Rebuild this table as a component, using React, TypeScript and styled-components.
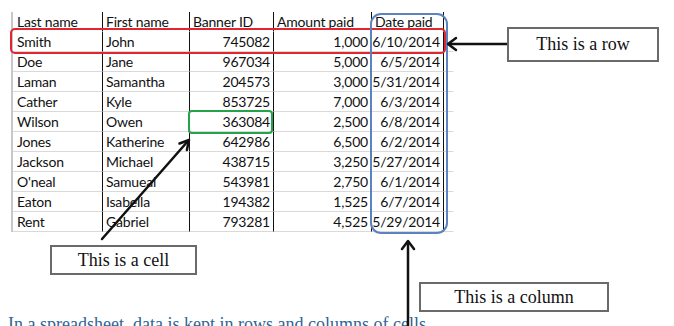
import styled, { createGlobalStyle } from 'styled-components';

const GlobalStyle = createGlobalStyle`
  html, body {
    margin: 0;
    padding: 0;
    background: #fff;
  }
`;

const Page = styled.div`
  position: relative;
  width: 674px;
  height: 326px;
  overflow: hidden;
  background: #fff;
`;

const Sheet = styled.div`
  display: grid;
  grid-template-columns: 90px 87px 84px 98px 72px 10px;
  grid-auto-rows: 20px;
  margin: 12px 0 0 11px;
  width: max-content;
  border-left: 2px solid #c8c8c8;
  font-family: Lato, 'Liberation Sans', sans-serif;
  font-size: 14px;
  letter-spacing: -0.2px;
  color: #111;
`;

const Cell = styled.div<{ $num?: boolean; $edge?: boolean; $head?: boolean }>`
  display: flex;
  align-items: center;
  justify-content: ${(p) => (p.$num ? 'flex-end' : 'flex-start')};
  padding: 0 3px;
  border-bottom: 1px solid ${(p) => (p.$head ? 'transparent' : '#d9d9d9')};
  border-right: 1px solid ${(p) => (p.$edge ? 'transparent' : '#111')};
  white-space: nowrap;
  overflow: hidden;
  box-sizing: border-box;
  &:nth-child(6n + 1) {
    padding-left: 4px;
  }
`;

const Mark = styled.div<{ $color: string; $radius: number }>`
  position: absolute;
  box-sizing: border-box;
  border: 2px solid ${(p) => p.$color};
  border-radius: ${(p) => p.$radius}px;
  pointer-events: none;
`;

const Label = styled.div`
  position: absolute;
  display: flex;
  align-items: center;
  justify-content: center;
  box-sizing: border-box;
  border: 2px solid #6a6a6a;
  background: #fff;
  font-family: 'Liberation Serif', 'Times New Roman', serif;
  font-size: 18px;
  color: #111;
`;

const Arrows = styled.svg`
  position: absolute;
  left: 0;
  top: 0;
  pointer-events: none;
`;

const Caption = styled.p`
  margin: 82px 0 0 8px;
  font-family: 'Liberation Serif', 'Times New Roman', serif;
  font-size: 18px;
  color: #2f6494;
  white-space: nowrap;
`;

const rows: [string, string, string, string, string][] = [
  ['Smith', 'John', '745082', '1,000', '6/10/2014'],
  ['Doe', 'Jane', '967034', '5,000', '6/5/2014'],
  ['Laman', 'Samantha', '204573', '3,000', '5/31/2014'],
  ['Cather', 'Kyle', '853725', '7,000', '6/3/2014'],
  ['Wilson', 'Owen', '363084', '2,500', '6/8/2014'],
  ['Jones', 'Katherine', '642986', '6,500', '6/2/2014'],
  ['Jackson', 'Michael', '438715', '3,250', '5/27/2014'],
  ["O'neal", 'Samueal', '543981', '2,750', '6/1/2014'],
  ['Eaton', 'Isabella', '194382', '1,525', '6/7/2014'],
  ['Rent', 'Gabriel', '793281', '4,525', '5/29/2014'],
];

const headers = ['Last name', 'First name', 'Banner ID', 'Amount paid', 'Date paid'];

export default function App() {
  return (
    <Page>
      <GlobalStyle />
      <Sheet>
        {headers.map((h) => (
          <Cell key={h} $head>
            {h}
          </Cell>
        ))}
        <Cell $edge $head />
        {rows.flatMap((r) => [
          <Cell key={r[0] + 'a'}>{r[0]}</Cell>,
          <Cell key={r[0] + 'b'}>{r[1]}</Cell>,
          <Cell key={r[0] + 'c'} $num>
            {r[2]}
          </Cell>,
          <Cell key={r[0] + 'd'} $num>
            {r[3]}
          </Cell>,
          <Cell key={r[0] + 'e'} $num>
            {r[4]}
          </Cell>,
          <Cell key={r[0] + 'f'} $edge />,
        ])}
      </Sheet>
      <Caption>In a spreadsheet, data is kept in rows and columns of cells.</Caption>

      <Mark $color="#e0262e" $radius={5} style={{ left: 10, top: 28, width: 436, height: 26 }} />
      <Mark $color="#5b83c2" $radius={11} style={{ left: 370, top: 13, width: 78, height: 221 }} />
      <Mark $color="#25a24c" $radius={4} style={{ left: 188, top: 110, width: 85, height: 24 }} />

      <Arrows width="674" height="326" viewBox="0 0 674 326">
        <g stroke="#111" strokeWidth="2.5" fill="none" strokeLinecap="round" strokeLinejoin="round">
          <line x1="508" y1="44" x2="449" y2="44" />
          <polyline points="456,38 448,44 456,50" />
          <line x1="408" y1="328" x2="408" y2="242" />
          <polyline points="402,249 408,241 414,249" />
          <line x1="102" y1="239" x2="188" y2="141" />
          <polyline points="179.5,143.5 189,140 186.9,150" />
        </g>
      </Arrows>

      <Label style={{ left: 507, top: 27, width: 152, height: 35 }}>This is a row</Label>
      <Label style={{ left: 50, top: 245, width: 147, height: 30 }}>This is a cell</Label>
      <Label style={{ left: 419, top: 282, width: 190, height: 30 }}>This is a column</Label>
    </Page>
  );
}
